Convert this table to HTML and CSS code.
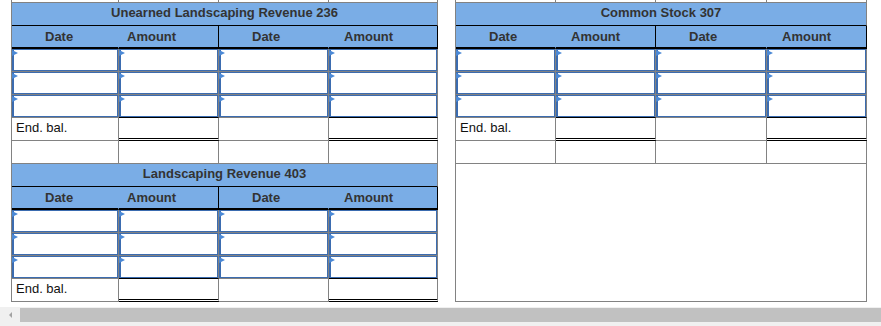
FILE: index.html
```html
<!DOCTYPE html>
<html lang="en">
<head>
<meta charset="utf-8">
<title>T-accounts</title>
<link rel="stylesheet" href="styles.css">
</head>
<body>
<div class="sheet">
  <div class="col col-left">
    <div class="row gl strip"><div></div><div></div><div></div><div></div></div>
    <div class="title first">Unearned Landscaping Revenue 236</div>
    <div class="row gl head">
      <div class="date">Date</div><div class="amt amt-first">Amount</div><div class="date">Date</div><div class="amt">Amount</div>
    </div>
    <div class="row gl inrow"><div><span class="inp"></span></div><div><span class="inp"></span></div><div><span class="inp"></span></div><div><span class="inp"></span></div></div>
    <div class="row gl inrow"><div><span class="inp"></span></div><div><span class="inp"></span></div><div><span class="inp"></span></div><div><span class="inp"></span></div></div>
    <div class="row gl inrow last"><div><span class="inp"></span></div><div class="amt-col"><span class="inp"></span></div><div><span class="inp"></span></div><div class="amt-col"><span class="inp"></span></div></div>
    <div class="row gl end"><div class="lbl">End. bal.</div><div class="tot"></div><div></div><div class="tot"></div></div>
    <div class="row gl"><div></div><div></div><div></div><div></div></div>
    <div class="title">Landscaping Revenue 403</div>
    <div class="row gl head">
      <div class="date">Date</div><div class="amt amt-first">Amount</div><div class="date">Date</div><div class="amt">Amount</div>
    </div>
    <div class="row gl inrow"><div><span class="inp"></span></div><div><span class="inp"></span></div><div><span class="inp"></span></div><div><span class="inp"></span></div></div>
    <div class="row gl inrow"><div><span class="inp"></span></div><div><span class="inp"></span></div><div><span class="inp"></span></div><div><span class="inp"></span></div></div>
    <div class="row gl inrow last"><div><span class="inp"></span></div><div class="amt-col"><span class="inp"></span></div><div><span class="inp"></span></div><div class="amt-col"><span class="inp"></span></div></div>
    <div class="row gl end"><div class="lbl">End. bal.</div><div class="tot"></div><div></div><div class="tot"></div></div>
  </div>
  <div class="col col-right">
    <div class="row gr strip"><div></div><div></div><div></div><div></div></div>
    <div class="title first">Common Stock 307</div>
    <div class="row gr head">
      <div class="date">Date</div><div class="amt">Amount</div><div class="date">Date</div><div class="amt">Amount</div>
    </div>
    <div class="row gr inrow"><div><span class="inp"></span></div><div><span class="inp"></span></div><div><span class="inp"></span></div><div><span class="inp"></span></div></div>
    <div class="row gr inrow"><div><span class="inp"></span></div><div><span class="inp"></span></div><div><span class="inp"></span></div><div><span class="inp"></span></div></div>
    <div class="row gr inrow last"><div><span class="inp"></span></div><div class="amt-col"><span class="inp"></span></div><div><span class="inp"></span></div><div class="amt-col"><span class="inp"></span></div></div>
    <div class="row gr end"><div class="lbl">End. bal.</div><div class="tot"></div><div></div><div class="tot"></div></div>
    <div class="row gr"><div></div><div></div><div></div><div></div></div>
    <div class="box"></div>
  </div>
</div>
<div class="hscroll">
  <div class="arrow-area"><span class="arrow"></span></div>
  <div class="thumb"></div>
</div>
</body>
</html>
```
FILE: styles.css
```css
* { box-sizing: border-box; }
html, body { margin: 0; padding: 0; overflow: hidden; background: #fff; }
body {
  font-family: "Liberation Sans", Arial, Helvetica, sans-serif;
  font-size: 13px;
  color: #111;
  width: 881px;
  height: 326px;
}
.sheet {
  display: flex;
  gap: 17px;
  padding-left: 11px;
  height: 302px;
}
.col {
  display: flex;
  flex-direction: column;
  border-left: 1px solid #828282;
}
.col-left { width: 427px; }
.col-right { width: 412px; }

.row { display: grid; height: 23px; flex: none; }
.gl { grid-template-columns: 107px 100px 110px 109px; }
.gr { grid-template-columns: 100px 100px 111px 100px; }
.row > div {
  border-right: 1px solid #828282;
  border-bottom: 1px solid #828282;
}
.strip { height: 2px; }
.strip > div { border-bottom: 0; }

.title {
  flex: none;
  height: 23px;
  background: #7aade6;
  border-right: 1px solid #828282;
  border-bottom: 1px solid #000;
  text-align: center;
  font-weight: bold;
  color: #333;
  line-height: 20px;
}
.title.first {
  height: 24px;
  border-top: 1px solid #828282;
}

.head > div {
  background: #7aade6;
  border-bottom: 2px solid #000;
  font-weight: bold;
  color: #333;
  line-height: 21px;
  white-space: nowrap;
}
.head > .date { border-right-color: #7aade6; padding-left: 33px; }
.head > .amt { border-right-color: #000; padding-left: 15px; }
.head > .amt-first { padding-left: 8px; }

.inrow > div { display: flex; }
.inp {
  flex: 1;
  display: block;
  border: 1px solid #3b6cb0;
  border-left-width: 2px;
  position: relative;
}
.inp::before {
  content: "";
  position: absolute;
  left: -2px;
  top: 0;
  border-left: 6px solid #4b89d6;
  border-top: 3.5px solid transparent;
  border-bottom: 3.5px solid transparent;
}
.inrow.last > .amt-col { border-bottom-color: #000; }

.end > .lbl { padding-left: 4px; line-height: 20px; white-space: nowrap; }
.end > .tot { border-bottom: 3px double #000; }

.box {
  flex: none;
  height: 138px;
  border-right: 1px solid #828282;
  border-bottom: 1px solid #828282;
}

.hscroll {
  display: flex;
  margin-top: 5px;
  height: 19px;
  background: #f0f0f0;
}
.arrow-area {
  width: 20px;
  display: flex;
  align-items: center;
  justify-content: center;
  padding-bottom: 3px;
}
.arrow {
  display: block;
  width: 0;
  height: 0;
  border-right: 3px solid #a3a3a3;
  border-top: 3px solid transparent;
  border-bottom: 3px solid transparent;
}
.thumb {
  flex: 1;
  margin-top: 1px;
  height: 14px;
  background: #c1c1c1;
}
```
